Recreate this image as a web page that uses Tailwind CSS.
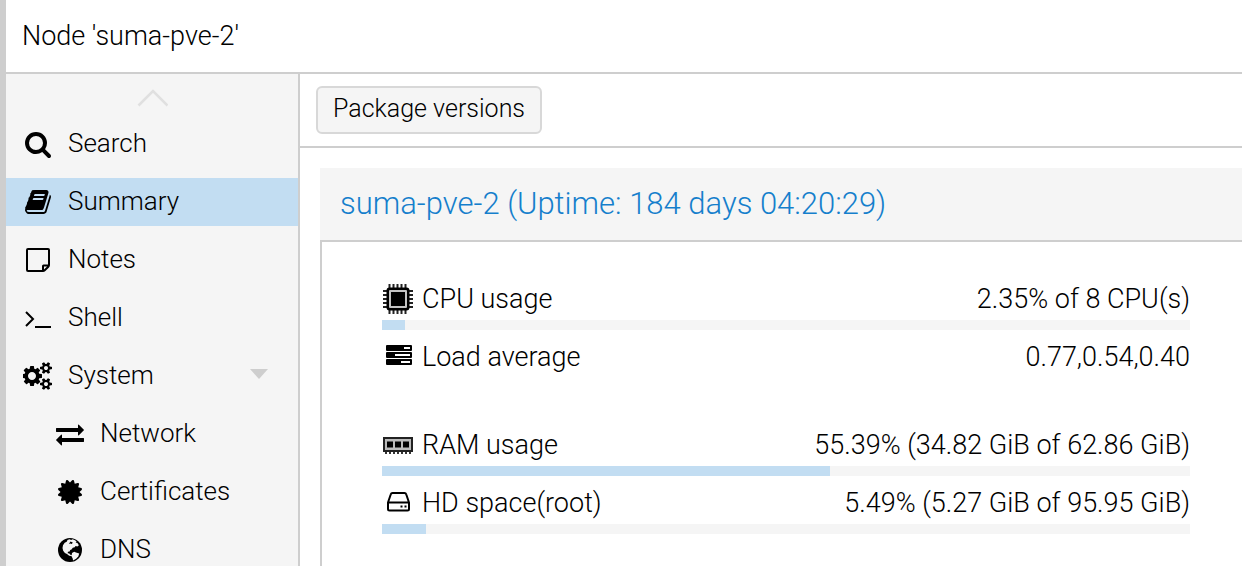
<!DOCTYPE html>
<html lang="en">
<head>
    <meta charset="UTF-8">
    <meta name="viewport" content="width=device-width, initial-scale=1.0">
    <title>Node 'suma-pve-2'</title>
    <script src="https://cdn.jsdelivr.net/npm/@tailwindcss/browser@4"></script>
</head>
<body class="flex flex-col h-screen overflow-hidden bg-white text-black border-l-6 border-[#cecece] font-['Roboto',sans-serif] font-light">
    <!-- Title bar -->
    <header class="shrink-0 pl-4 border-b-2 border-[#cecece]">
        <h1 class="text-[27px] leading-[72px] font-light">Node 'suma-pve-2'</h1>
    </header>

    <div class="flex flex-1 min-h-0">
        <!-- Sidebar -->
        <nav class="w-[294px] shrink-0 overflow-hidden bg-[#f5f5f5] border-r-2 border-[#cecece] text-[26px]">
            <button type="button" aria-label="Scroll up" class="flex w-full h-[46px] justify-center pt-[14px]">
                <svg class="w-8 h-5" viewBox="0 0 32 20" fill="none" stroke="#e0e0e0" stroke-width="2.6"><path d="M2.500 17.500L17 3l14.500 14.500"/></svg>
            </button>
            <ul class="flex flex-col gap-[10px]">
                <li>
                    <a href="#" class="flex items-center h-12 pl-[17px] gap-[15px]">
                        <svg class="w-[30px] h-7" viewBox="-64 0 1920 1792"><path d="M1216 832q0-185-131.500-316.500t-316.500-131.500-316.500 131.500-131.500 316.500 131.500 316.500 316.500 131.500 316.500-131.500 131.500-316.500zm512 832q0 52-38 90t-90 38q-54 0-90-38l-343-342q-179 124-399 124-143 0-273.500-55.500t-225-150-150-225-55.500-273.500 55.500-273.500 150-225 225-150 273.500-55.500 273.500 55.500 225 150 150 225 55.500 273.500q0 220-124 399l343 343q37 37 37 90z"/></svg>
                        <span class="pb-[2px]">Search</span>
                    </a>
                </li>
                <li>
                    <a href="#" aria-current="page" class="flex items-center h-12 pl-[17px] gap-[15px] bg-[#c2ddf2]">
                        <svg class="w-[30px] h-7" viewBox="-64 0 1920 1792"><path d="M1703 478q40 57 18 129l-275 906q-19 64-76.500 107.500t-122.500 43.500h-923q-77 0-148.500-53.500t-99.500-131.500q-24-67-2-127 0-4 3-27t4-37q1-8-3-21.500t-3-19.500q2-11 8-21t16.500-23.500 16.500-23.500q23-38 45-91.500t30-91.500q3-10 .5-30t-.5-28q3-11 17-28t17-23q21-36 42-92t25-90q1-9-2.500-32t.5-28q4-13 22-30.500t22-22.500q19-26 42.500-84.500t27.500-96.500q1-8-3-25.500t-2-26.500q2-8 9-18t18-23 17-21q8-12 16.500-30.500t15-35 16-36 19.500-32 26.500-23.500 36-11.500 47.500 5.500l-1 3q38-9 51-9h761q74 0 114 56t18 130l-274 906q-36 119-71.500 153.500t-128.500 34.500h-869q-27 0-38 15-11 16-1 43 24 70 144 70h923q29 0 56-15.500t35-41.500l300-987q7-22 5-57 38 15 59 43zm-1064 2q-4 13 2 22.500t20 9.500h608q13 0 25.500-9.500t16.500-22.500l21-64q4-13-2-22.500t-20-9.500h-608q-13 0-25.500 9.500t-16.500 22.500zm-83 256q-4 13 2 22.500t20 9.500h608q13 0 25.500-9.500t16.500-22.500l21-64q4-13-2-22.500t-20-9.500h-608q-13 0-25.500 9.500t-16.500 22.500z"/></svg>
                        <span class="pb-[2px]">Summary</span>
                    </a>
                </li>
                <li>
                    <a href="#" class="flex items-center h-12 pl-[17px] gap-[15px]">
                        <svg class="w-[30px] h-7" viewBox="0 0 30 28" fill="none" stroke="#000" stroke-width="2" stroke-linejoin="round"><path d="M19.500 25H5a1 1 0 0 1-1-1V4a1 1 0 0 1 1-1h20a1 1 0 0 1 1 1v15q0 1-.7 1.700l-3.600 3.600q-.7.7-1.700.7zM20 25v-5a.5.5 0 0 1 .5-.5H26"/></svg>
                        <span class="pb-[2px]">Notes</span>
                    </a>
                </li>
                <li>
                    <a href="#" class="flex items-center h-12 pl-[17px] gap-[15px]">
                        <svg class="w-[30px] h-7" viewBox="0 0 30 28" fill="none" stroke="#000" stroke-width="2"><path d="M3 8l7 7-7 7M12 23h16"/></svg>
                        <span class="pb-[2px]">Shell</span>
                    </a>
                </li>
                <li>
                    <a href="#" aria-expanded="true" class="flex items-center h-12 pl-[17px] pr-[30px] gap-[15px]">
                        <svg class="w-[30px] h-7" viewBox="0 0 1920 1792"><path d="M832 896q0-106-75-181t-181-75-181 75-75 181 75 181 181 75 181-75 75-181zm768 512q0-52-38-90t-90-38-90 38-38 90q0 53 37.500 90.500t90.500 37.500 90.500-37.500 37.500-90.500zm0-1024q0-52-38-90t-90-38-90 38-38 90q0 53 37.500 90.500t90.500 37.500 90.500-37.500 37.500-90.500zm-384 421v185q0 10-7 19.500t-16 10.500l-155 24q-11 35-32 76 34 48 90 115 7 11 7 20 0 12-7 19-23 30-82.500 89.500t-78.500 59.500q-11 0-21-7l-115-90q-37 19-77 31-11 108-23 155-7 24-30 24h-186q-11 0-20-7.500t-10-17.500l-23-153q-34-10-75-31l-118 89q-7 7-20 7-11 0-21-8-144-133-144-160 0-9 7-19 10-14 41-53t47-61q-23-44-35-82l-152-24q-10-1-17-9.500t-7-19.500v-185q0-10 7-19.500t16-10.500l155-24q11-35 32-76-34-48-90-115-7-11-7-20 0-12 7-20 22-30 82-89t79-59q11 0 21 7l115 90q34-18 77-32 11-108 23-154 7-24 30-24h186q11 0 20 7.500t10 17.500l23 153q34 10 75 31l118-89q8-7 20-7 11 0 21 8 144 133 144 160 0 8-7 19-12 16-42 54t-45 60q23 48 34 82l152 23q10 2 17 10.500t7 19.500zm640 533v140q0 16-149 31-12 27-30 52 51 113 51 138 0 4-4 7-122 71-124 71-8 0-46-47t-52-68q-20 2-30 2t-30-2q-14 21-52 68t-46 47q-2 0-124-71-4-3-4-7 0-25 51-138-18-25-30-52-149-15-149-31v-140q0-16 149-31 13-29 30-52-51-113-51-138 0-4 4-7 4-2 35-20t59-34 30-16q8 0 46 46.500t52 67.500q20-2 30-2t30 2q51-71 92-112l6-2q4 0 124 70 4 3 4 7 0 25-51 138 17 23 30 52 149 15 149 31zm0-1024v140q0 16-149 31-12 27-30 52 51 113 51 138 0 4-4 7-122 71-124 71-8 0-46-47t-52-68q-20 2-30 2t-30-2q-14 21-52 68t-46 47q-2 0-124-71-4-3-4-7 0-25 51-138-18-25-30-52-149-15-149-31v-140q0-16 149-31 13-29 30-52-51-113-51-138 0-4 4-7 4-2 35-20t59-34 30-16q8 0 46 46.500t52 67.500q20-2 30-2t30 2q51-71 92-112l6-2q4 0 124 70 4 3 4 7 0 25-51 138 17 23 30 52 149 15 149 31z"/></svg>
                        <span class="flex-1 pb-[2px]">System</span>
                        <svg class="w-[18px] h-[14px]" viewBox="0 0 18 14"><path fill="#cecece" d="M0 0h18l-9 10z"/></svg>
                    </a>
                    <ul class="flex flex-col gap-[10px] pt-[10px]">
                        <li>
                            <a href="#" class="flex items-center h-12 pl-[49px] gap-[15px]">
                                <svg class="w-[30px] h-7" viewBox="-64 0 1920 1792"><path d="M1792 1184v192q0 13-9.500 22.500t-22.500 9.500h-1376v192q0 13-9.500 22.500t-22.500 9.500q-12 0-24-10l-319-320q-9-9-9-22 0-14 9-23l320-320q9-9 23-9 13 0 22.500 9.500t9.500 22.500v192h1376q13 0 22.500 9.500t9.500 22.500zm0-544q0 14-9 23l-320 320q-9 9-23 9-13 0-22.500-9.500t-9.500-22.500v-192h-1376q-13 0-22.500-9.500t-9.500-22.500v-192q0-13 9.500-22.500t22.500-9.500h1376v-192q0-14 9-23t23-9q12 0 24 10l319 319q9 9 9 23z"/></svg>
                                <span class="pb-[2px]">Network</span>
                            </a>
                        </li>
                        <li>
                            <a href="#" class="flex items-center h-12 pl-[49px] gap-[15px]">
                                <svg class="w-[30px] h-7" viewBox="-64 0 1920 1792"><path d="M1504 896l138 135q30 28 20 70-12 41-52 51l-188 48 53 186q12 41-19 70-29 31-70 19l-186-53-48 188q-10 40-51 52-12 2-19 2-31 0-51-22l-135-138-135 138q-28 30-70 20-41-11-51-52l-48-188-186 53q-41 12-70-19-31-29-19-70l53-186-188-48q-40-10-52-51-10-42 20-70l138-135-138-135q-30-28-20-70 12-41 52-51l188-48-53-186q-12-41 19-70 29-31 70-19l186 53 48-188q10-41 51-51 41-12 70 19l135 139 135-139q29-30 70-19 41 10 51 51l48 188 186-53q41-12 70 19 31 29 19 70l-53 186 188 48q40 10 52 51 10 42-20 70z"/></svg>
                                <span class="pb-[2px]">Certificates</span>
                            </a>
                        </li>
                        <li>
                            <a href="#" class="flex items-center h-12 pl-[49px] gap-[15px]">
                                <svg class="w-[30px] h-7" viewBox="0 0 30 28"><circle cx="15" cy="14" r="12"/><path fill="#f5f5f5" d="M12.500 4l2-.8 1.600.7 1.500-.6 2.400.9 1.600 1.300-1 1 1.800.5 1.500 2.300-1.500 1.200-1.800-.5-.9 1.300-1.900.5-1.300 1.700-1.300.6-.6 1.300-1.700.3-.2 1.500 1.700.2.8 1.400 1.600.3-.4 1-2.200-.3-2.200-1.800-2.100-1-1.700-2.300-.7-2.800.5-2.600 1.700-2.500 2-1zM17 17l2.200-1.300 1.800.7 3.200 1.200-.9 2.800-2.200 2.300-3 1.900-.5-2.400-1-1.700z"/><path d="M15.500 5.500l2.300.9-1 1.700-1.600-.6-1.400.4z"/></svg>
                                <span class="pb-[2px]">DNS</span>
                            </a>
                        </li>
                    </ul>
                </li>
            </ul>
        </nav>

        <!-- Content -->
        <main class="flex-1 min-w-0 flex flex-col">
            <div class="shrink-0 flex px-4 py-3 border-b-2 border-[#cecece]">
                <button type="button" class="h-12 px-[15px] pb-[2px] rounded-md border-2 border-[#d8d8d8] bg-[#f5f5f5] text-[25px]">Package versions</button>
            </div>

            <section class="flex-1 min-h-0 flex flex-col pl-5 pt-5">
                <h2 class="shrink-0 pl-5 bg-[#f5f5f5] text-[#157fcc] text-[31px] leading-[72px] font-light whitespace-nowrap">suma-pve-2 (Uptime: 184 days 04:20:29)</h2>
                <div class="flex-1 min-h-0 border-t-2 border-l-2 border-[#cecece] pl-[60px] pr-[52px] pt-[38px] text-[27px] leading-[38px]">
                    <div class="mb-2">
                        <div class="flex items-center">
                            <svg class="w-8 h-8 mr-2" viewBox="0 0 32 32">
                                <path stroke="#222" stroke-width="2" d="M7.500 1v30M11.500 1v30M15.500 1v30M19.500 1v30M23.500 1v30M1 8h30M1 12h30M1 16h30M1 20h30M1 24h30"/>
                                <rect x="4.500" y="4.500" width="23" height="23" rx="3"/>
                                <rect x="7" y="7" width="18" height="18" rx="1" fill="#c4c4c4"/>
                                <rect x="9" y="9" width="14" height="14"/>
                            </svg>
                            <span class="flex-1">CPU usage</span>
                            <span>2.35% of 8 CPU(s)</span>
                        </div>
                        <div class="h-[10px] mt-[2px] bg-[#f5f5f5]"><div class="h-full bg-[#c2ddf2]" style="width: 2.85%"></div></div>
                    </div>
                    <div class="mb-[50px]">
                        <div class="flex items-center">
                            <svg class="w-8 h-8 mr-2" viewBox="0 0 32 32">
                                <rect x="4" y="4" width="26" height="6" rx="1"/>
                                <rect x="4" y="11" width="26" height="6" rx="1"/>
                                <rect x="4" y="18" width="26" height="6" rx="1"/>
                                <path fill="#fff" d="M22 6h6v2h-6zM13 13h15v2H13zM19 20h9v2h-9z"/>
                            </svg>
                            <span class="flex-1">Load average</span>
                            <span>0.77,0.54,0.40</span>
                        </div>
                    </div>
                    <div class="mb-2">
                        <div class="flex items-center">
                            <svg class="w-8 h-8 mr-2" viewBox="0 0 32 32">
                                <path stroke="#333" stroke-width="2" d="M4 22v3M8 22v3M12 22v3M16 22v3M20 22v3M24 22v3M28 22v3"/>
                                <rect x="2" y="9" width="28" height="13" fill="#bbb" stroke="#222" stroke-width="2"/>
                                <path d="M5 12.500h6v6H5zM13 12.500h6v6h-6zM21 12.500h6v6h-6z"/>
                            </svg>
                            <span class="flex-1">RAM usage</span>
                            <span>55.39% (34.82 GiB of 62.86 GiB)</span>
                        </div>
                        <div class="h-[10px] mt-[2px] bg-[#f5f5f5]"><div class="h-full bg-[#c2ddf2]" style="width: 55.39%"></div></div>
                    </div>
                    <div>
                        <div class="flex items-center">
                            <svg class="w-8 h-8 mr-2" viewBox="0 0 32 32" fill="none" stroke="#000" stroke-width="2" stroke-linejoin="round">
                                <path d="M6 15.500L8.800 7.300Q9.200 6 10.500 6h12q1.300 0 1.700 1.300L27 15.500v6.500q0 1.500-1.500 1.500h-18Q6 23.500 6 22zM6 15.500h21"/>
                                <path d="M18.500 19.500h2M22.500 19.500h2"/>
                            </svg>
                            <span class="flex-1">HD space(root)</span>
                            <span>5.49% (5.27 GiB of 95.95 GiB)</span>
                        </div>
                        <div class="h-[10px] mt-[2px] bg-[#f5f5f5]"><div class="h-full bg-[#c2ddf2]" style="width: 5.49%"></div></div>
                    </div>
                </div>
            </section>
        </main>
    </div>
</body>
</html>
